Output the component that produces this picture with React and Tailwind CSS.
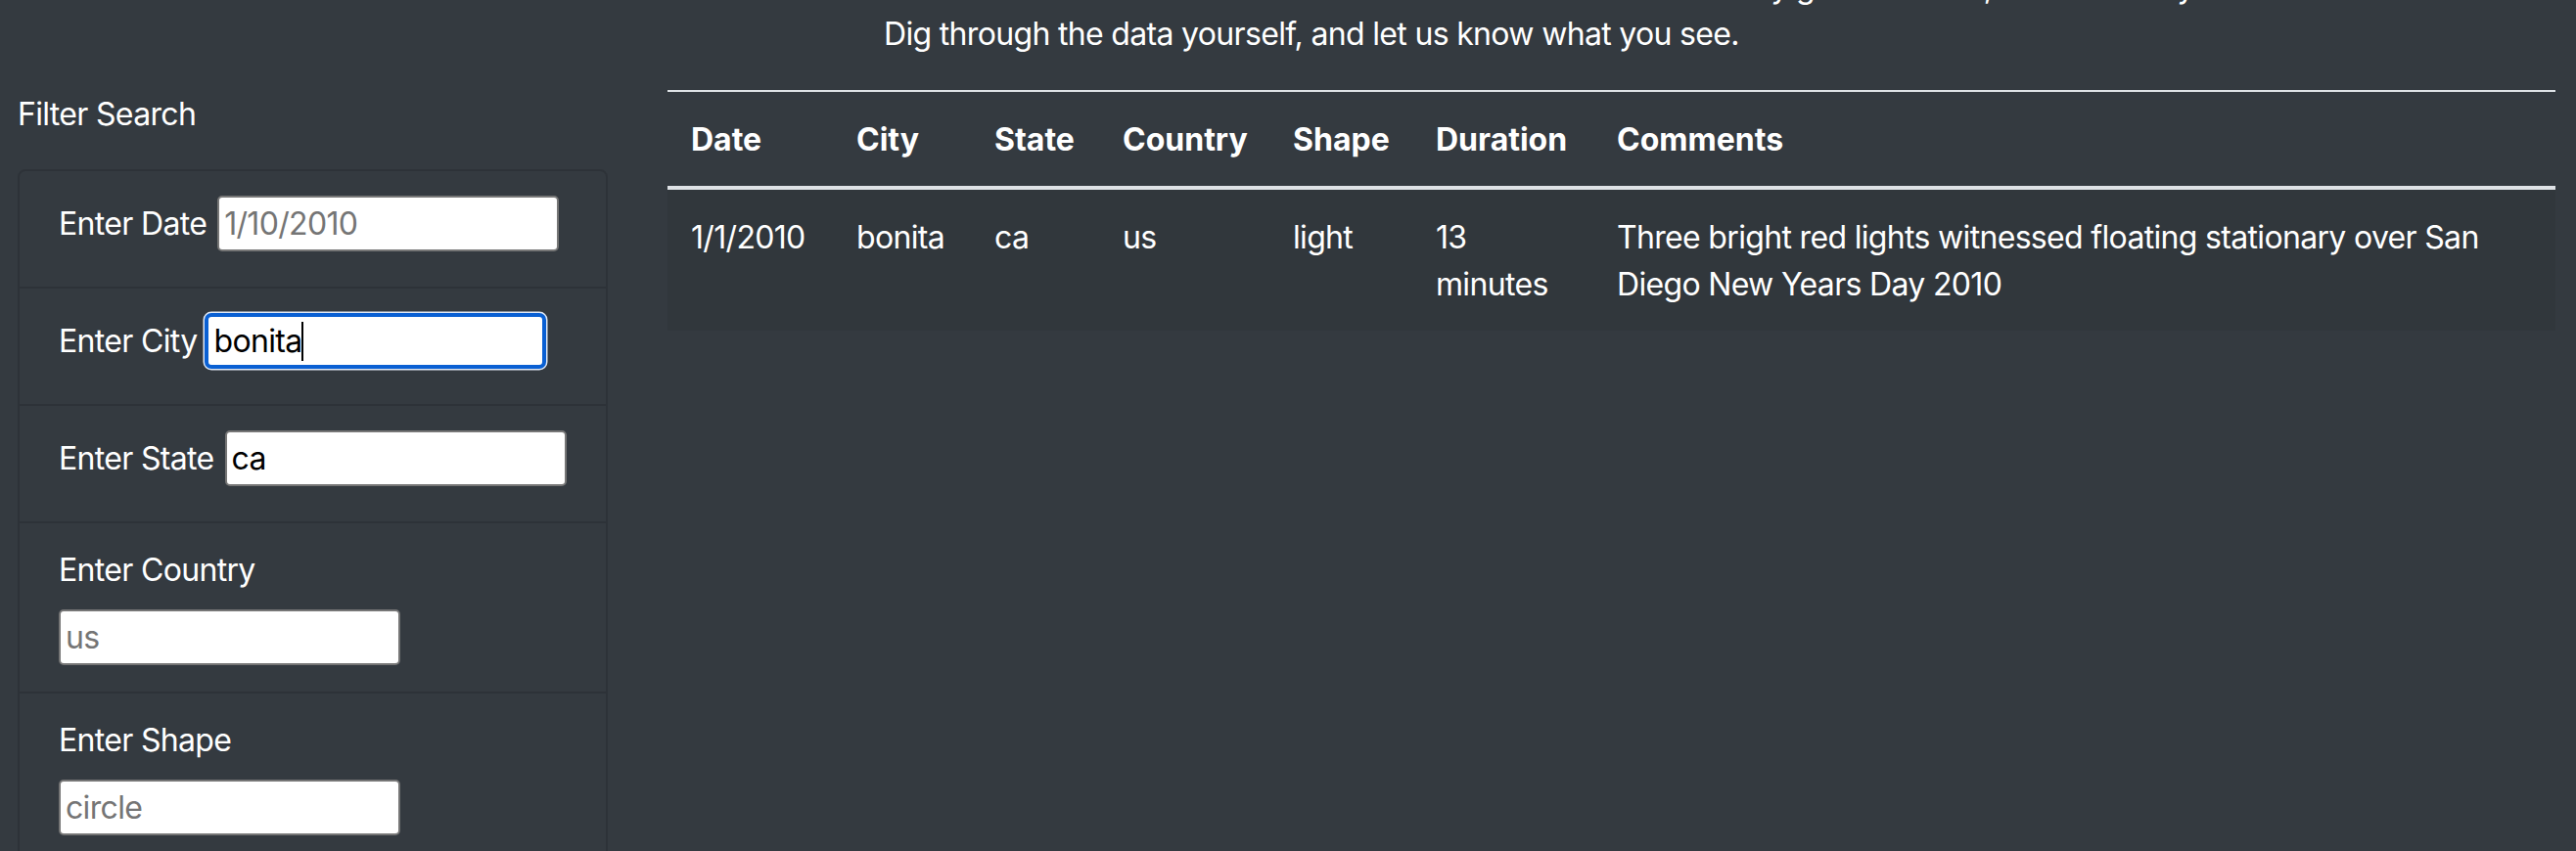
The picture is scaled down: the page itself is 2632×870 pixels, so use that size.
import React from 'react';

const fieldBase =
    'h-[57px] w-[349px] bg-white px-[5px] text-[32px] leading-[normal] tracking-[-0.021em] text-black placeholder:text-[#757575] outline-none';

const filters = [
    { id: 'datetime', label: 'Enter Date', placeholder: '1/10/2010', inline: true },
    { id: 'city', label: 'Enter City', value: 'bonita', inline: true, focused: true },
    { id: 'state', label: 'Enter State', value: 'ca', inline: true },
    { id: 'country', label: 'Enter Country', placeholder: 'us' },
    { id: 'shape', label: 'Enter Shape', placeholder: 'circle' },
];

const columns = [
    { name: 'Date', width: 'w-[169px]' },
    { name: 'City', width: 'w-[141px]' },
    { name: 'State', width: 'w-[131px]' },
    { name: 'Country', width: 'w-[174px]' },
    { name: 'Shape', width: 'w-[146px]' },
    { name: 'Duration', width: 'w-[185px]' },
    { name: 'Comments', width: 'w-auto' },
];

const sightings = [
    {
        datetime: '1/1/2010',
        city: 'bonita',
        state: 'ca',
        country: 'us',
        shape: 'light',
        duration: '13 minutes',
        comments: 'Three bright red lights witnessed floating stationary over San Diego New Years Day 2010',
    },
];

const FilterInput = ({ filter }) => {
    if (filter.focused) {
        return (
            <span className="relative inline-block">
                <input
                    id={filter.id}
                    type="text"
                    defaultValue={filter.value}
                    className={`${fieldBase} block border-[4px] border-[#0a60d3] rounded-[7px] shadow-[0_0_0_1.5px_#dfe8f5]`}
                />
                {/* caret, drawn over the text */}
                <span className="pointer-events-none absolute inset-y-0 left-[9px] flex items-center text-[32px] tracking-[-0.021em] text-transparent whitespace-pre">
                    {filter.value}
                    <span className="inline-block w-[2px] h-[40px] bg-black" />
                </span>
            </span>
        );
    }

    return (
        <input
            id={filter.id}
            type="text"
            placeholder={filter.placeholder}
            defaultValue={filter.value}
            className={`${fieldBase} block border-2 border-[#767676] rounded-[5px]`}
        />
    );
};

const FilterItem = ({ filter, first }) => (
    <li
        className={`px-[40px] py-[24px] ${first ? '' : 'border-t-2 border-[rgba(0,0,0,0.125)]'}`}
    >
        {filter.inline ? (
            <div className="flex items-start h-[70px]">
                <label htmlFor={filter.id} className="shrink-0 whitespace-nowrap leading-[57px] mt-[1px]">
                    {filter.label}
                </label>
                <div className={`shrink-0 mt-[1px] ${filter.focused ? 'ml-[8px]' : 'ml-[11px]'}`}>
                    <FilterInput filter={filter} />
                </div>
            </div>
        ) : (
            <div>
                <label htmlFor={filter.id} className="block whitespace-nowrap leading-[48px]">
                    {filter.label}
                </label>
                <div className="mt-[16px] mb-[3px]">
                    <FilterInput filter={filter} />
                </div>
            </div>
        )}
    </li>
);

const App = () => {
    return (
        <div
            className="h-[870px] overflow-hidden bg-[#343a40] text-white text-[32px] leading-[48px] tracking-[-0.021em]"
            style={{ fontFamily: 'Inter, "Noto Sans", sans-serif' }}
        >
            <div className="pl-[903px] pr-[21px]">
                <p className="-mt-[37px] mb-[33px]">
                    <span className="block whitespace-nowrap">
                        Those who believe state that close encounters are real and they go to the end, and then they will not be silenced about it.
                    </span>
                    <span className="block whitespace-nowrap">
                        Dig through the data yourself, and let us know what you see.
                    </span>
                </p>
            </div>

            <div className="flex items-start">
                <aside className="ml-[18px] w-[603px] shrink-0">
                    <div className="mt-[1px] mb-[32px]">Filter Search</div>
                    <ul className="border-2 border-[rgba(0,0,0,0.125)] rounded-[8px]">
                        {filters.map((filter, i) => (
                            <FilterItem key={filter.id} filter={filter} first={i === 0} />
                        ))}
                    </ul>
                </aside>

                <div className="ml-[61px] w-[1929px] shrink-0">
                    <table className="w-full table-fixed border-collapse text-left">
                        <colgroup>
                            {columns.map((col) => (
                                <col key={col.name} className={col.width} />
                            ))}
                        </colgroup>
                        <thead>
                            <tr>
                                {columns.map((col) => (
                                    <th
                                        key={col.name}
                                        className="pt-[25px] pb-[23px] px-[24px] font-bold tracking-normal leading-[48px] align-bottom border-t-2 border-b-4 border-[#dee2e6]"
                                    >
                                        {col.name}
                                    </th>
                                ))}
                            </tr>
                        </thead>
                        <tbody>
                            {sightings.map((s, i) => (
                                <tr key={i} className="bg-[rgba(0,0,0,0.05)]">
                                    <td className="pt-[25px] pb-[23px] px-[24px] align-top">{s.datetime}</td>
                                    <td className="pt-[25px] pb-[23px] px-[24px] align-top">{s.city}</td>
                                    <td className="pt-[25px] pb-[23px] px-[24px] align-top">{s.state}</td>
                                    <td className="pt-[25px] pb-[23px] px-[24px] align-top">{s.country}</td>
                                    <td className="pt-[25px] pb-[23px] px-[24px] align-top">{s.shape}</td>
                                    <td className="pt-[25px] pb-[23px] px-[24px] align-top">{s.duration}</td>
                                    <td className="pt-[25px] pb-[23px] px-[24px] align-top">{s.comments}</td>
                                </tr>
                            ))}
                        </tbody>
                    </table>
                </div>
            </div>
        </div>
    );
};

export default App;
